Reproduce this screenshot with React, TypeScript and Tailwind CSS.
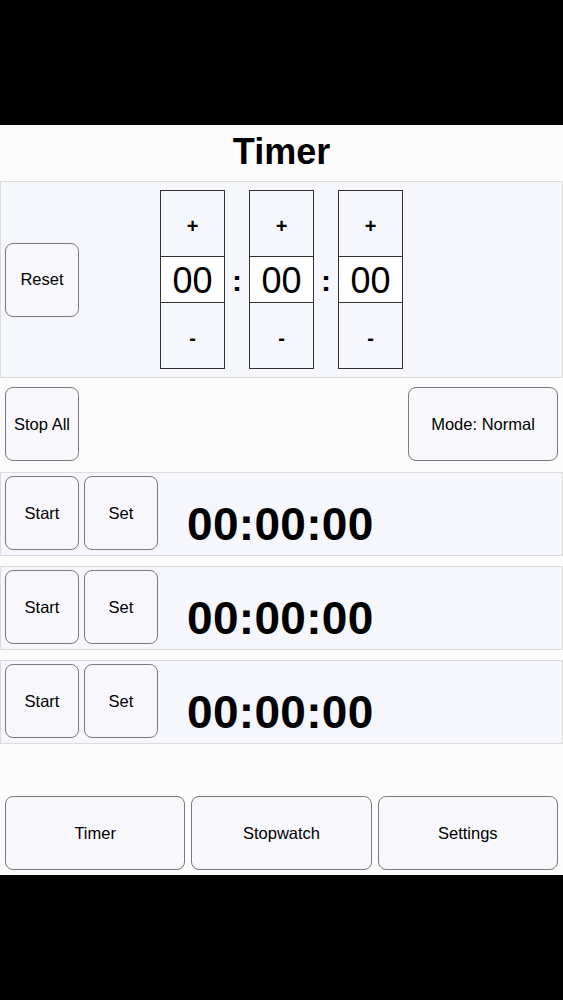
import React from "react";

const font = { fontFamily: '"Liberation Sans", Arial, Helvetica, sans-serif' };

function Btn({ label, className = "" }: { label: string; className?: string }) {
  return (
    <button
      className={`flex items-center justify-center rounded-[8px] border border-[#7a7a7a] bg-[#f8f8fc] text-[16.5px] text-black ${className}`}
    >
      {label}
    </button>
  );
}

function Spinner() {
  return (
    <div className="flex w-[65px] flex-col border border-[#333]">
      <div className="flex h-[65px] items-center justify-center bg-[#f5f7fc] pt-[5px] text-[20px] font-bold">+</div>
      <div className="flex h-[47px] items-center justify-center border-y border-[#333] bg-white pt-[3px] text-[36px] leading-none">
        00
      </div>
      <div className="flex h-[65px] items-center justify-center bg-[#f5f7fc] pt-[4px] text-[20px] font-bold">-</div>
    </div>
  );
}

function Colon() {
  return <div className="flex w-[24px] items-center justify-center pt-[1px] text-[30px] font-bold">:</div>;
}

function TimerRow() {
  return (
    <div className="flex h-[84px] items-start gap-[5px] border border-[#dcdcdc] bg-[#f5f7fc] pl-[4px] pt-[3px]">
      <Btn label="Start" className="h-[74px] w-[74px]" />
      <Btn label="Set" className="h-[74px] w-[74px]" />
      <div className="ml-[24px] mt-[25px] text-[46px] font-bold leading-none tracking-[0.3px]">00:00:00</div>
    </div>
  );
}

export default function App() {
  return (
    <div className="flex h-[1000px] w-[563px] flex-col bg-black text-black" style={font}>
      <div className="h-[125px]" />
      <div className="flex h-[750px] flex-col bg-[#fdfcfc]">
        <div className="flex h-[56px] items-center justify-center pb-[3px] text-[36px] font-bold">Timer</div>
        <div className="grid h-[197px] grid-cols-[1fr_auto_1fr] items-center border border-[#dcdcdc] bg-[#f5f7fc]">
          <div className="pl-[4px]">
            <Btn label="Reset" className="h-[74px] w-[74px]" />
          </div>
          <div className="flex">
            <Spinner />
            <Colon />
            <Spinner />
            <Colon />
            <Spinner />
          </div>
          <div />
        </div>
        <div className="flex items-center justify-between px-[5px] pt-[9px] pb-[11px]">
          <Btn label="Stop All" className="h-[74px] w-[74px]" />
          <Btn label="Mode: Normal" className="h-[74px] w-[150px]" />
        </div>
        <div className="flex flex-col gap-[10px]">
          <TimerRow />
          <TimerRow />
          <TimerRow />
        </div>
        <div className="flex-1" />
        <div className="flex gap-[6px] px-[5px] pb-[5px]">
          <Btn label="Timer" className="h-[74px] flex-1" />
          <Btn label="Stopwatch" className="h-[74px] flex-1" />
          <Btn label="Settings" className="h-[74px] flex-1" />
        </div>
      </div>
      <div className="flex-1" />
    </div>
  );
}
